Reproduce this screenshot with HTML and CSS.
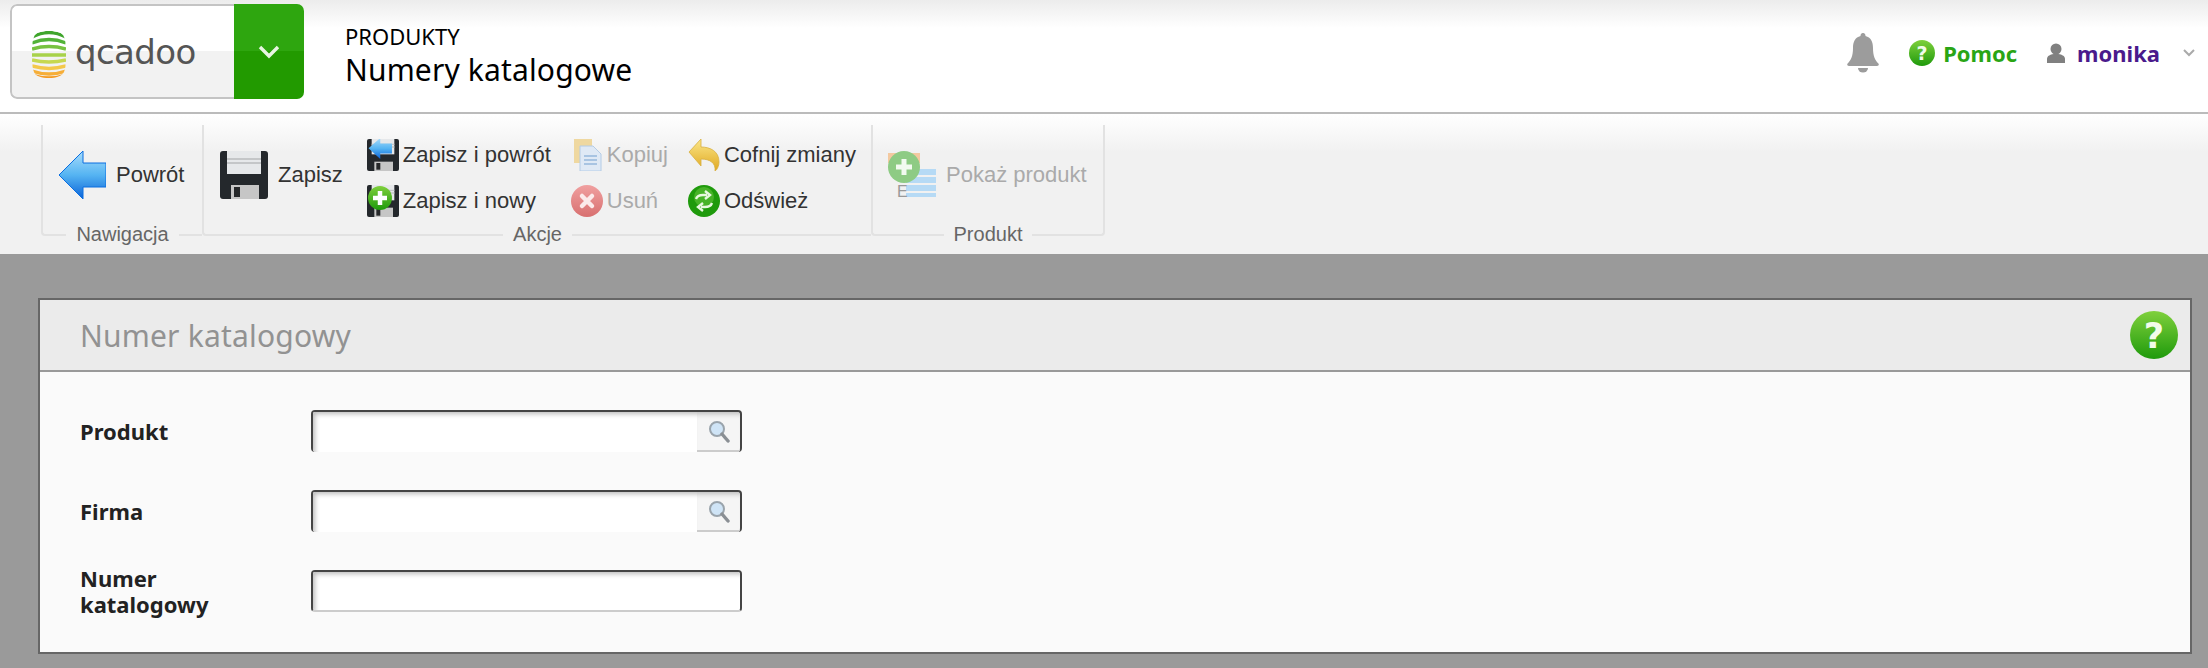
FILE: index.html
```html
<!DOCTYPE html>
<html lang="pl">
<head>
  <meta charset="UTF-8">
  <title>Numery katalogowe</title>
  <link rel="stylesheet" href="styles.css">
</head>
<body>
  <svg class="defs" width="0" height="0">
    <defs>
      <linearGradient id="gGreen" x1="0" y1="0" x2="0" y2="1">
        <stop offset="0" stop-color="#7fd03c"/><stop offset="1" stop-color="#1f9a0c"/>
      </linearGradient>
      <linearGradient id="gBlue" x1="0" y1="0" x2="0" y2="1">
        <stop offset="0" stop-color="#a8dcfb"/><stop offset="0.5" stop-color="#55b4f2"/><stop offset="1" stop-color="#0a62d8"/>
      </linearGradient>
      <linearGradient id="gRed" x1="0" y1="0" x2="0" y2="1">
        <stop offset="0" stop-color="#f0a0a0"/><stop offset="1" stop-color="#d87070"/>
      </linearGradient>
      <linearGradient id="gYellow" x1="0" y1="0" x2="0" y2="1">
        <stop offset="0" stop-color="#fbe78a"/><stop offset="1" stop-color="#e0a820"/>
      </linearGradient>
      <symbol id="floppy" viewBox="0 0 48 48">
        <path d="M3 0h42a3 3 0 0 1 3 3v42a3 3 0 0 1-3 3H3a3 3 0 0 1-3-3V3a3 3 0 0 1 3-3z" fill="#24282c"/>
        <rect x="7" y="0" width="34" height="23" fill="#e6e8ea"/>
        <path d="M7 8h34M7 12h34" stroke="#c4c6c8" stroke-width="2"/>
        <rect x="11" y="34" width="28" height="14" fill="#c6c6c6"/>
        <rect x="14" y="36" width="6" height="10" fill="#26282a"/>
      </symbol>
      <symbol id="arrowLeft" viewBox="0 0 48 48">
        <path d="M25 0v12h23v24H25v12L1 24z" fill="url(#gBlue)" stroke="#0a6ee0" stroke-width="1"/>
      </symbol>
      <symbol id="check" viewBox="0 0 26 26">
        <circle cx="13" cy="13" r="13" fill="url(#gGreen)"/>
        <text x="13" y="20" class="help-mark">?</text>
      </symbol>
      <symbol id="lens" viewBox="0 0 24 24">
        <circle cx="10" cy="10" r="7" fill="#cfe4f6" stroke="#9aa4ac" stroke-width="2"/>
        <path d="M15 15l6 7" stroke="#8a8f94" stroke-width="3.4" stroke-linecap="round"/>
      </symbol>
      <clipPath id="ballClip">
        <path d="M17 0c8 0 14 2 15 6 3 6 3 29 0 35-2 4-8 6-15 6S3 45 2 41C-1 35-1 12 2 6 3 2 9 0 17 0z"/>
      </clipPath>
    </defs>
  </svg>

  <header class="topbar">
    <div class="logo-box">
      <div class="logo">
        <svg class="logo-ball" viewBox="0 0 34 47" width="34" height="47">
          <g clip-path="url(#ballClip)" fill="none" stroke-width="3.4">
            <path d="M0 6q17-9 34 0" stroke="#3fa52c"/>
            <path d="M0 12q17-7 34 0" stroke="#52b238"/>
            <path d="M0 18q17-5 34 0" stroke="#77c240"/>
            <path d="M0 24h34" stroke="#a8d24a"/>
            <path d="M0 29q17 4 34 0" stroke="#c6d850"/>
            <path d="M0 35q17 5 34 0" stroke="#f4c84a"/>
            <path d="M0 40q17 6 34 0" stroke="#f6ae38"/>
            <path d="M0 44q17 6 34 0" stroke="#f59a20"/>
          </g>
        </svg>
        <span class="logo-text">qcadoo</span>
      </div>
      <div class="logo-menu">
        <svg viewBox="0 0 24 14" width="24" height="14"><path d="M3 2l9 9 9-9" fill="none" stroke="#e8f5e2" stroke-width="3.4"/></svg>
      </div>
    </div>
    <div class="crumbs">
      <div class="crumb-section">PRODUKTY</div>
      <div class="crumb-page">Numery katalogowe</div>
    </div>
    <div class="user-area">
      <svg class="bell" viewBox="0 0 32 40" width="32" height="40">
        <path d="M16 0a2.4 2.4 0 0 1 2.4 3C24 4.400 26 9 26 15c0 8 2 12 5.400 15.500.8 1 .4 2.500-1.400 2.500H2c-1.800 0-2.200-1.500-1.400-2.500C4 27 6 23 6 15 6 9 8 4.400 13.600 3A2.400 2.400 0 0 1 16 0z" fill="#9c9c9c"/>
        <path d="M11 35h10a5 4.500 0 0 1-10 0z" fill="#9c9c9c"/>
      </svg>
      <a class="help-link"><svg width="26" height="26"><use href="#check"/></svg>Pomoc</a>
      <a class="user-link">
        <svg viewBox="0 0 18 20" width="18" height="20"><circle cx="9" cy="6" r="5.500" fill="#808080"/><path d="M0 20v-4c0-3 3-5 9-5s9 2 9 5v4z" fill="#808080"/></svg>
        monika
      </a>
      <svg class="user-caret" viewBox="0 0 12 8" width="12" height="8"><path d="M1 1l5 5 5-5" fill="none" stroke="#aaa" stroke-width="2"/></svg>
    </div>
  </header>

  <nav class="ribbon">
    <section class="group">
      <div class="group-body">
        <a class="btn-big"><svg width="48" height="48"><use href="#arrowLeft"/></svg>Powrót</a>
      </div>
      <div class="group-foot"><span>Nawigacja</span></div>
    </section>

    <section class="group group-actions">
      <div class="group-body">
        <a class="btn-big"><svg width="48" height="48"><use href="#floppy"/></svg>Zapisz</a>
        <div class="btn-col col-save">
          <a class="btn-small">
            <svg viewBox="0 0 32 32" width="32" height="32"><use href="#floppy" width="32" height="32"/><path d="M17 0v7h15v13H17v7L2 13z" fill="url(#gBlue)" transform="translate(0 -1) scale(.78)"/></svg>
            Zapisz i powrót
          </a>
          <a class="btn-small">
            <svg viewBox="0 0 32 32" width="32" height="32"><use href="#floppy" width="32" height="32"/><circle cx="13" cy="13" r="12" fill="url(#gGreen)"/><path d="M13 6v14M6 13h14" stroke="#fff" stroke-width="4.500"/></svg>
            Zapisz i nowy
          </a>
        </div>
        <div class="btn-col col-edit">
          <a class="btn-small is-disabled">
            <svg viewBox="0 0 32 32" width="32" height="32"><rect x="3" y="0" width="18" height="24" fill="#efd8a0"/><path d="M9 7h13l8 8v17H9z" fill="#dfe9f5" stroke="#b4cce6"/><path d="M13 17h13M13 21h13M13 25h13" stroke="#a8c4e2" stroke-width="2"/></svg>
            Kopiuj
          </a>
          <a class="btn-small is-disabled">
            <svg viewBox="0 0 32 32" width="32" height="32"><circle cx="16" cy="16" r="16" fill="url(#gRed)"/><path d="M11 11l10 10M21 11L11 21" stroke="#fbeaea" stroke-width="4.500" stroke-linecap="round"/></svg>
            Usuń
          </a>
        </div>
        <div class="btn-col">
          <a class="btn-small">
            <svg viewBox="0 0 32 32" width="32" height="32"><path d="M13 0v8c9 0 18 4 18 15 0 4-2 8-4 9 1-8-5-12-14-12v7L1 13z" fill="url(#gYellow)" stroke="#d8b040" stroke-width=".8"/></svg>
            Cofnij zmiany
          </a>
          <a class="btn-small">
            <svg viewBox="0 0 32 32" width="32" height="32"><circle cx="16" cy="16" r="16" fill="#1f9a0c"/><circle cx="16" cy="12" r="10" fill="#47b328"/><path d="M8 14c1-3 4-4 7-4h4M17 6l5 4-5 4M24 18c-1 3-4 4-7 4h-4M15 26l-5-4 5-4" fill="none" stroke="#e8f8e0" stroke-width="2.400"/></svg>
            Odśwież
          </a>
        </div>
      </div>
      <div class="group-foot"><span>Akcje</span></div>
    </section>

    <section class="group group-last">
      <div class="group-body">
        <a class="btn-big is-disabled">
          <svg viewBox="0 0 48 48" width="48" height="48">
            <rect x="0" y="2" width="32" height="10" fill="#f3c9a0"/>
            <path d="M18 18h30v6H18zM18 26h30v6H18zM18 34h30v6H18zM18 42h30v4H18z" fill="#b6daf5"/>
            <text x="9" y="46" class="list-e">E</text>
            <circle cx="16" cy="16" r="16" fill="#8ecb84"/>
            <path d="M16 8v16M8 16h16" stroke="#f2faf0" stroke-width="5"/>
          </svg>
          Pokaż produkt
        </a>
      </div>
      <div class="group-foot"><span>Produkt</span></div>
    </section>
  </nav>

  <main class="page">
    <div class="panel">
      <div class="panel-head">
        <h1>Numer katalogowy</h1>
        <svg viewBox="0 0 26 26" width="48" height="48"><use href="#check"/></svg>
      </div>
      <form class="panel-body">
        <label for="product">Produkt</label>
        <div class="field has-lookup">
          <input id="product" type="text">
          <span class="field-lookup"><svg width="24" height="24"><use href="#lens"/></svg></span>
        </div>
        <label for="company">Firma</label>
        <div class="field has-lookup">
          <input id="company" type="text">
          <span class="field-lookup"><svg width="24" height="24"><use href="#lens"/></svg></span>
        </div>
        <label for="catalog">Numer katalogowy</label>
        <div class="field">
          <input id="catalog" type="text">
        </div>
      </form>
    </div>
  </main>
</body>
</html>
```

FILE: styles.css
```css
body {
  margin: 0;
  height: 668px;
  overflow: hidden;
  background: #9a9a9a;
  font-family: "Noto Sans", sans-serif;
  display: flex;
  flex-direction: column;
}

.defs {
  display: block;
  height: 0;
}

.help-mark {
  font-family: "DejaVu Sans", sans-serif;
  font-size: 19px;
  font-weight: bold;
  fill: #f2fbea;
  text-anchor: middle;
}

.list-e {
  font-family: "Liberation Sans", sans-serif;
  font-size: 16px;
  fill: #999;
}

/* top bar */
.topbar {
  height: 112px;
  border-bottom: 2px solid #bbb;
  background: linear-gradient(to bottom, #ececec, #fff 28px);
  display: flex;
  align-items: flex-start;
}

.logo-box {
  display: flex;
  width: 294px;
  height: 95px;
  margin: 4px 0 0 10px;
  border-radius: 7px;
  overflow: hidden;
}

.logo {
  flex: 1;
  display: flex;
  align-items: center;
  gap: 9px;
  padding-left: 20px;
  border: 2px solid #c4c4c4;
  border-right: none;
  border-radius: 7px 0 0 7px;
  background: linear-gradient(to bottom, #fff 50%, #f2f2f2 50%);
}

.logo-ball {
  margin-top: 5px;
}

.logo-text {
  font-family: "DejaVu Sans", sans-serif;
  font-size: 34px;
  color: #555;
  letter-spacing: -0.6px;
  margin-top: 1px;
}

.logo-menu {
  width: 70px;
  display: flex;
  align-items: center;
  justify-content: center;
  background: linear-gradient(to bottom, #2ea60f 50%, #229a00 50%);
}

.crumbs {
  margin: 21px 0 0 41px;
  color: #000;
}

.crumb-section {
  font-size: 22px;
  line-height: 30px;
}

.crumb-page {
  font-size: 30px;
  line-height: 38px;
  letter-spacing: 0.15px;
}

.user-area {
  margin-left: auto;
  display: flex;
  align-items: center;
  height: 38px;
  margin-top: 34px;
  padding-right: 13px;
  font-size: 22px;
  font-weight: bold;
}

.help-link {
  display: flex;
  align-items: center;
  gap: 8px;
  margin-left: 30px;
  color: #2aa515;
}

.user-link {
  display: flex;
  align-items: center;
  gap: 12px;
  margin-left: 30px;
  color: #4a1a8c;
}

.user-caret {
  margin-left: 23px;
}

/* ribbon */
.ribbon {
  height: 140px;
  box-sizing: border-box;
  padding: 11px 0 0 41px;
  display: flex;
  background: linear-gradient(to bottom, #fff, #f1f1f1 38px);
  font-family: "Liberation Sans", sans-serif;
  font-size: 22px;
  color: #333;
}

.group {
  display: flex;
  flex-direction: column;
  width: 161px;
  height: 120px;
}

.group-actions {
  width: 669px;
}

.group-last {
  width: 234px;
}

.group-body {
  flex: 1;
  display: flex;
  align-items: center;
  padding: 0 0 0 15px;
  border-left: 2px solid #e2e2e2;
}

.group-actions .group-body {
  padding-left: 16px;
}

.group-last .group-body {
  border-right: 2px solid #e2e2e2;
}

.group-foot {
  height: 20px;
  display: flex;
  align-items: center;
  gap: 10px;
  font-size: 20px;
  color: #666;
}

.group-foot span {
  margin-top: -2px;
}

.group-foot::before,
.group-foot::after {
  content: "";
  flex: 1;
  align-self: flex-start;
  height: 9px;
  border-bottom: 2px solid #e2e2e2;
}

.group-foot::before {
  border-left: 2px solid #e2e2e2;
  border-bottom-left-radius: 4px;
}

.group-last .group-foot::after {
  border-right: 2px solid #e2e2e2;
  border-bottom-right-radius: 4px;
}

.btn-big,
.btn-small {
  display: flex;
  align-items: center;
  white-space: nowrap;
}

.btn-big {
  gap: 10px;
}

.btn-small {
  gap: 4px;
}

.btn-col {
  display: flex;
  flex-direction: column;
  gap: 14px;
  margin: 6px 0 0 20px;
}

.col-save {
  margin-left: 24px;
}

.is-disabled {
  color: #aaa;
}

/* form panel */
.page {
  flex: 1;
  padding: 44px 16px 0 38px;
}

.panel {
  border: 2px solid #666;
  background: #fafafa;
}

.panel-head {
  height: 70px;
  border-bottom: 2px solid #999;
  background: #ebebeb;
  display: flex;
  align-items: center;
  justify-content: space-between;
  padding: 0 12px 0 40px;
}

.panel-head h1 {
  margin: 0;
  font-size: 30px;
  font-weight: normal;
  letter-spacing: 0.2px;
  color: #929292;
}

.panel-body {
  display: grid;
  grid-template-columns: 230px 432px;
  grid-auto-rows: 42px;
  row-gap: 38px;
  align-items: center;
  padding: 38px 0 40px 40px;
}

.panel-body label {
  font-size: 22px;
  font-weight: bold;
  line-height: 26px;
  color: #222;
  max-width: 150px;
}

.field {
  display: flex;
  box-sizing: border-box;
  height: 42px;
  margin-left: 1px;
  border: 2px solid #444;
  border-bottom-color: #ccc;
  border-radius: 4px;
  background: #f5f5f5;
  overflow: hidden;
}

.has-lookup {
  border-bottom: none;
}

.field input {
  flex: 1;
  min-width: 0;
  border: none;
  padding: 0;
  background: #fff;
  box-shadow: inset 6px 6px 5px -4px #bbb;
  outline: none;
}

.field-lookup {
  width: 43px;
  display: flex;
  align-items: center;
  justify-content: center;
  border-bottom: 2px solid #ccc;
  box-shadow: inset 0 6px 5px -4px #bbb;
}
```
